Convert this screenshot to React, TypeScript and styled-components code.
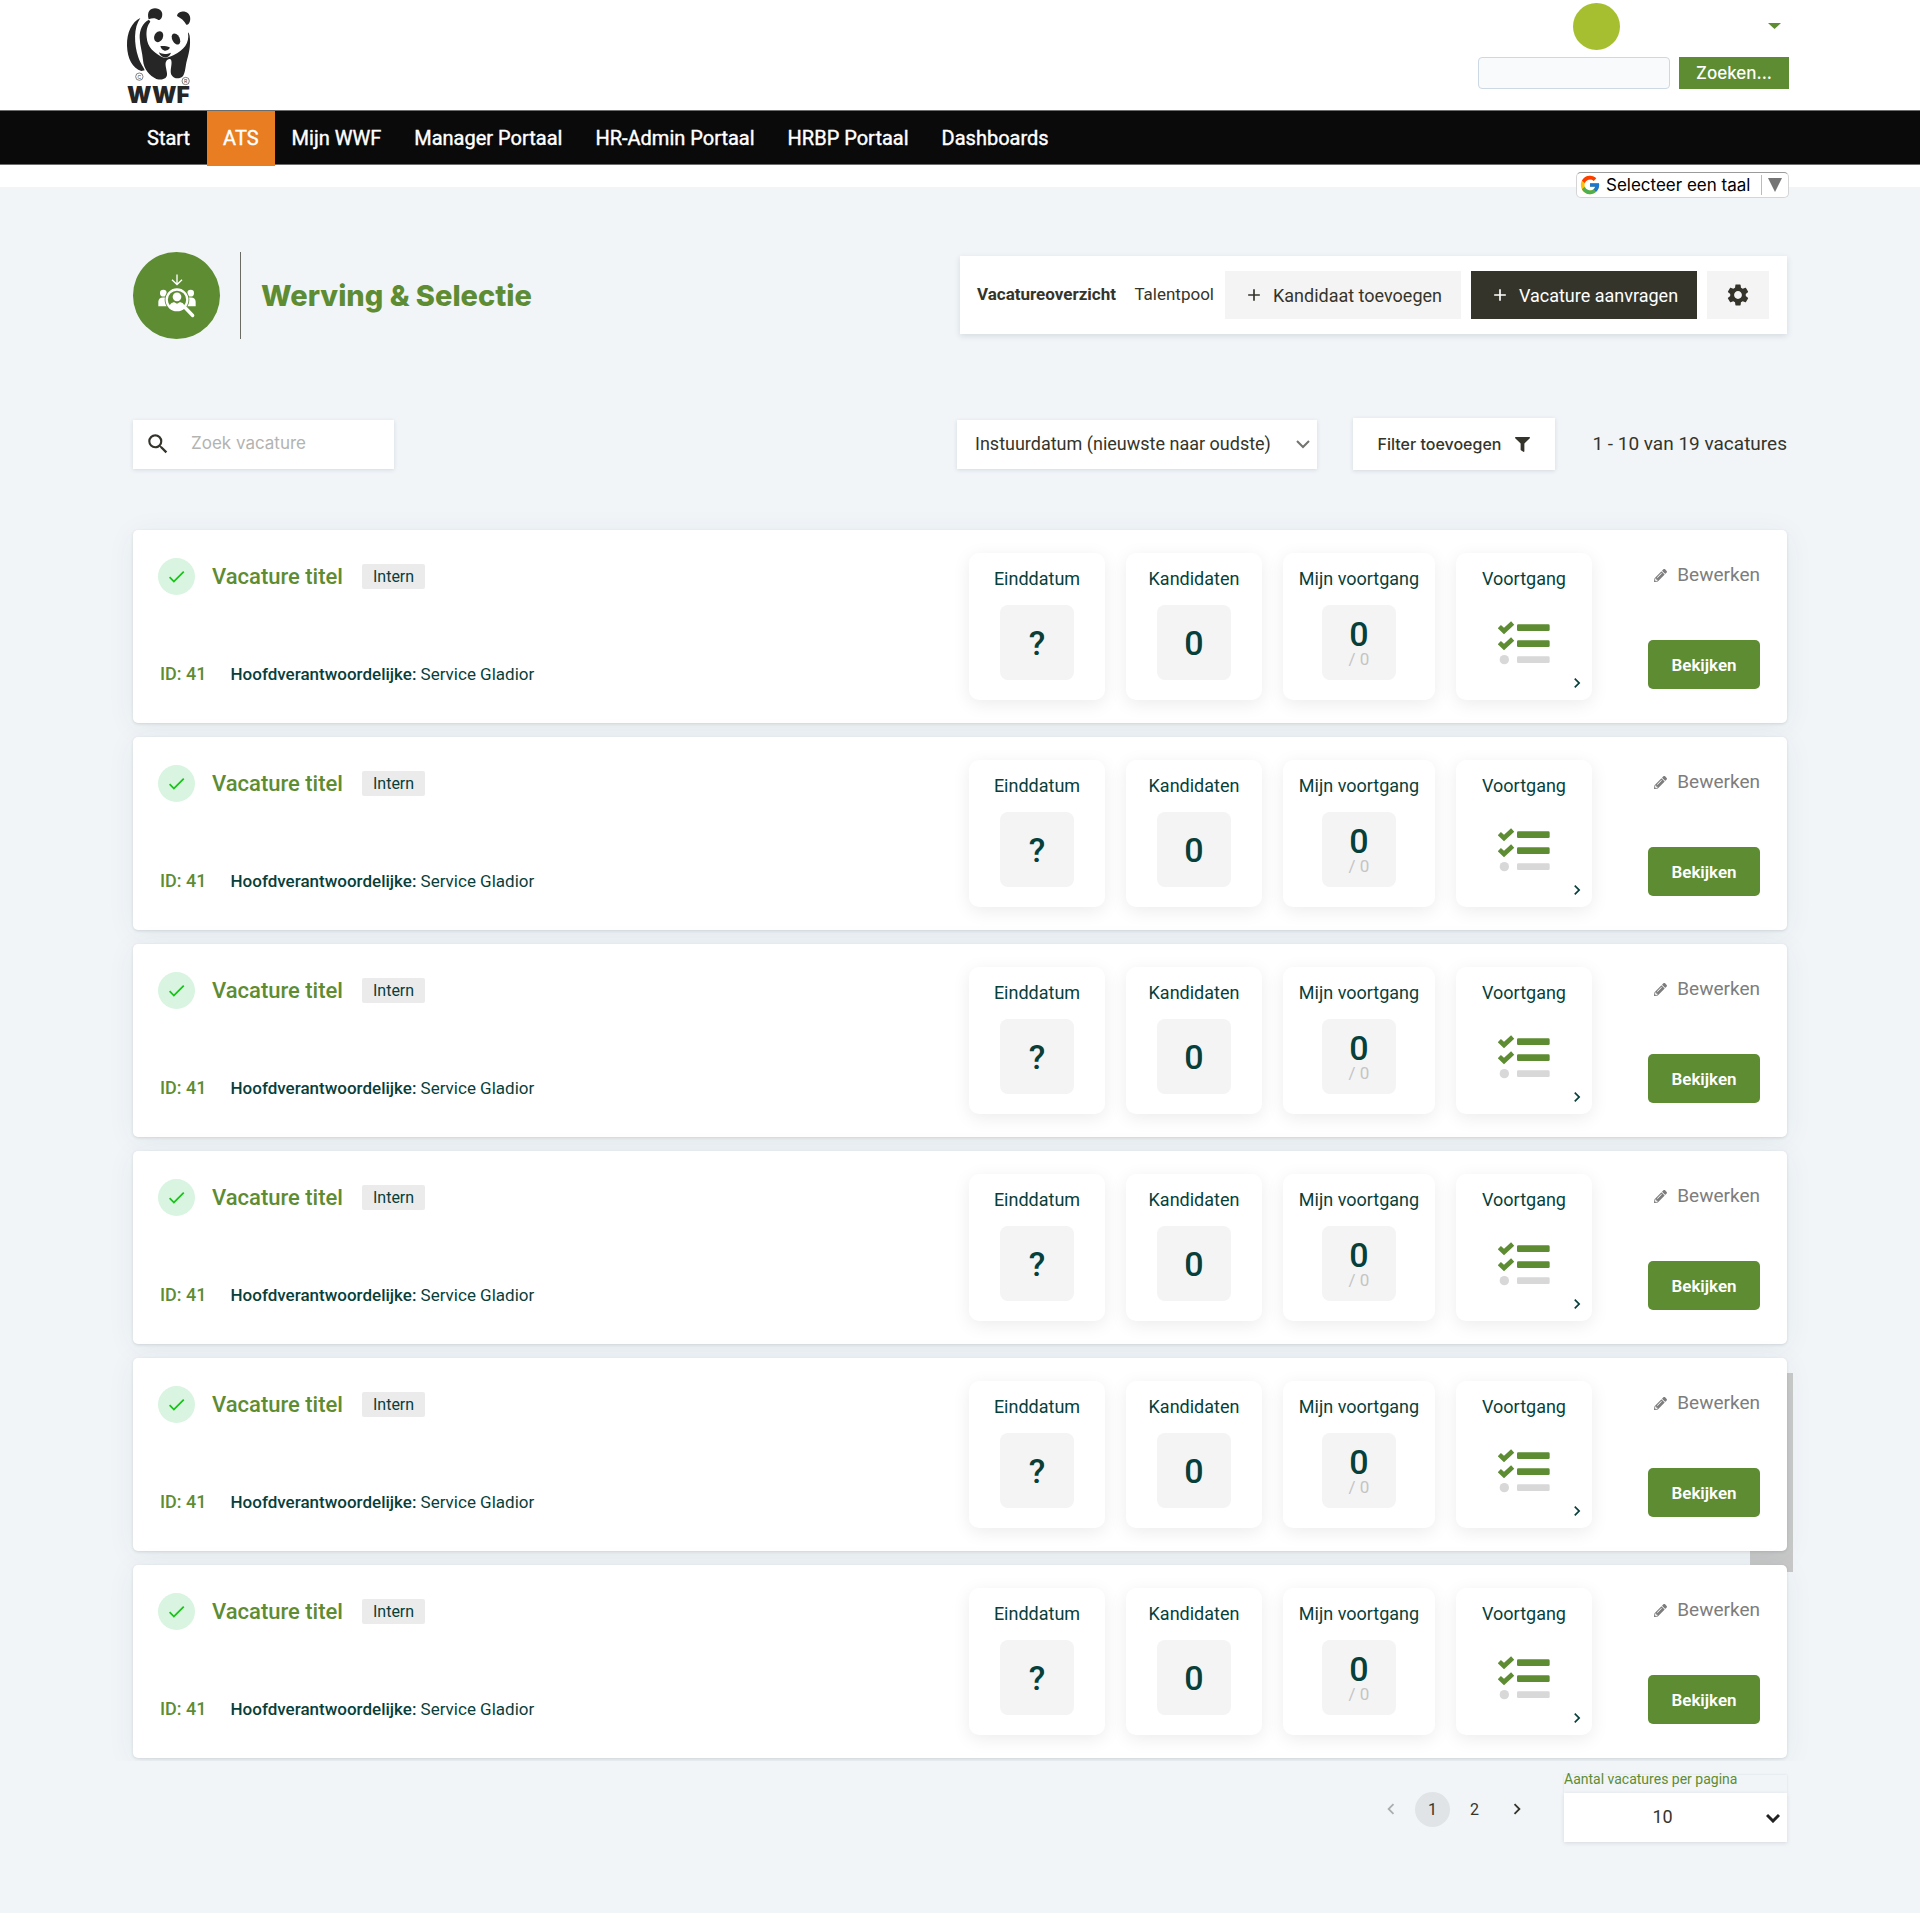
import React from 'react';
import styled, { createGlobalStyle, css } from 'styled-components';
import { FcGoogle } from 'react-icons/fc';
import { MdAdd, MdCheck, MdChevronLeft, MdChevronRight, MdSearch, MdSettings } from 'react-icons/md';
import { FaFilter, FaPencilAlt } from 'react-icons/fa';

const color = {
  green: '#5e8c33',
  teal: '#073f3b',
  ink: '#35342a',
  page: '#f1f5f8',
  black: '#0a0a0a',
  orange: '#e87d22',
  soft: '#f4f4f4',
};

const body = `Roboto, "Liberation Sans", sans-serif`;
const display = `Inter, "Open Sans", sans-serif`;

const GlobalStyle = createGlobalStyle`
  *, *::before, *::after { box-sizing: border-box; }
  body { margin: 0; background: ${color.page}; font-family: ${body}; color: ${color.ink}; }
  button, input, select { font: inherit; color: inherit; border: 0; margin: 0; padding: 0; border-radius: 0; }
  button { cursor: pointer; background: none; }
  h1, h2, p, ul { margin: 0; padding: 0; }
  ul { list-style: none; }
  a { color: inherit; text-decoration: none; }
  svg { display: block; flex: none; }
`;

const flatShadow = css`
  box-shadow: 0 1px 4px rgba(40, 60, 80, 0.14);
`;

/* Top of the page */

const Header = styled.header`
  display: flex;
  justify-content: space-between;
  height: 110px;
  padding: 0 131px 0 110px;
  background: #fff;
`;

const Account = styled.div`
  display: flex;
  flex-direction: column;
  align-items: flex-end;
  gap: 8px;
  padding-top: 3px;
`;

const ProfileMenu = styled.button`
  display: flex;
  align-items: center;
  justify-content: space-between;
  width: 216px;
  height: 46px;
  padding-right: 8px;
`;

const Avatar = styled.span`
  width: 47px;
  height: 47px;
  border-radius: 50%;
  background: #a6bf30;
`;

const SiteSearch = styled.form`
  display: flex;
  gap: 9px;
`;

const SiteSearchInput = styled.input`
  width: 192px;
  height: 32px;
  padding: 0 8px;
  border: 1px solid #ccd8e3;
  border-radius: 4px;
  background: #f9fafc;
  font-size: 16px;
`;

const SiteSearchButton = styled.button`
  width: 110px;
  height: 32px;
  background: ${color.green};
  color: #fff;
  font-family: ${display};
  font-size: 17px;
  font-weight: 500;
`;

const Nav = styled.nav`
  display: flex;
  gap: 1px;
  height: 55px;
  padding: 0 131px;
  background: ${color.black};
  border-top: 1px solid #6d6d6d;
  border-bottom: 1px solid #6d6d6d;
`;

const NavLink = styled.a<{ $active?: boolean }>`
  display: flex;
  align-items: center;
  height: 55px;
  padding: 0 16px 2px;
  font-size: 20px;
  color: #fff;
  -webkit-text-stroke: 0.4px #fff;
  background: ${(p) => (p.$active ? color.orange : 'transparent')};
`;

const LanguageStrip = styled.div`
  display: flex;
  justify-content: flex-end;
  height: 22px;
  padding: 7px 131px 0;
  background: #fff;
`;

const LanguagePicker = styled.label`
  display: flex;
  align-items: center;
  position: relative;
  width: 213px;
  height: 26px;
  padding-left: 2px;
  border: 1px solid #d5d5d5;
  border-top-color: #9b9b9b;
  border-radius: 5px;
  background: #fff;
`;

const LanguageSelect = styled.select`
  appearance: none;
  flex: 1;
  min-width: 0;
  height: 22px;
  padding: 0 0 0 5px;
  background: transparent;
  color: #000;
  font-family: ${display};
  font-size: 17px;
`;

const LanguageArrow = styled.span`
  display: flex;
  align-items: center;
  height: 20px;
  padding: 0 6px;
  border-left: 1px solid #bbb;
  pointer-events: none;
`;

/* Page heading and actions */

const Main = styled.main`
  padding: 65px 133px 71px;
`;

const Heading = styled.div`
  display: flex;
  align-items: flex-start;
  justify-content: space-between;
`;

const PageTitle = styled.div`
  display: flex;
  align-items: center;
`;

const TitleBadge = styled.span`
  display: grid;
  place-items: center;
  width: 87px;
  height: 87px;
  border-radius: 50%;
  background: ${color.green};
`;

const Title = styled.h1`
  display: flex;
  align-items: center;
  height: 87px;
  margin-left: 20px;
  padding-left: 20px;
  border-left: 1px solid #6b6b66;
  color: ${color.green};
  font-family: ${display};
  font-size: 29px;
  font-weight: 800;
`;

const Toolbar = styled.div`
  display: flex;
  align-items: center;
  width: 827px;
  height: 78px;
  margin-top: 4px;
  padding: 0 18px 0 17px;
  background: #fff;
  box-shadow: 0 2px 6px rgba(40, 60, 80, 0.14);
`;

const Tabs = styled.div`
  display: flex;
  flex: 1;
  justify-content: space-between;
  padding: 0 11px 2px 0;
`;

const Tab = styled.a<{ $active?: boolean }>`
  font-size: 17px;
  line-height: 24px;
  font-weight: ${(p) => (p.$active ? 700 : 400)};
`;

const ToolButton = styled.button<{ $dark?: boolean; $width: number }>`
  display: flex;
  align-items: center;
  justify-content: center;
  gap: 9px;
  width: ${(p) => p.$width}px;
  height: 48px;
  background: ${(p) => (p.$dark ? color.ink : color.soft)};
  color: ${(p) => (p.$dark ? '#fff' : color.ink)};
  font-size: 18px;

  & + & {
    margin-left: 10px;
  }
`;

/* Filters */

const Filters = styled.div`
  display: flex;
  align-items: center;
  height: 52px;
  margin-top: 79px;
`;

const VacancySearch = styled.label`
  ${flatShadow}
  display: flex;
  align-items: center;
  gap: 20px;
  width: 261px;
  height: 49px;
  margin-right: auto;
  padding: 0 12px;
  background: #fff;
`;

const VacancyInput = styled.input`
  flex: 1;
  min-width: 0;
  height: 32px;
  padding-bottom: 2px;
  background: transparent;
  font-family: ${display};
  font-size: 17px;
  outline: 0;

  &::placeholder {
    color: #b3b3b0;
    opacity: 1;
  }
`;

const SelectBox = styled.div<{ $width: number }>`
  ${flatShadow}
  display: grid;
  align-items: center;
  width: ${(p) => p.$width}px;
  height: 49px;
  background: #fff;

  & > * {
    grid-area: 1 / 1;
  }

  & > svg {
    justify-self: end;
    margin-right: 7px;
    pointer-events: none;
  }
`;

const Select = styled.select<{ $centered?: boolean }>`
  appearance: none;
  width: 100%;
  height: 49px;
  padding: ${(p) => (p.$centered ? '0 26px 2px 0' : '0 30px 2px 18px')};
  background: transparent;
  font-size: 18px;
  text-align: ${(p) => (p.$centered ? 'center' : 'left')};
  text-align-last: ${(p) => (p.$centered ? 'center' : 'left')};
`;

const FilterButton = styled.button`
  ${flatShadow}
  display: flex;
  align-items: center;
  justify-content: center;
  gap: 14px;
  width: 202px;
  height: 52px;
  margin: 0 36px;
  background: #fff;
  font-family: ${display};
  font-size: 16px;
  font-weight: 500;
`;

const Count = styled.p`
  width: 196px;
  padding-bottom: 2px;
  font-size: 19px;
  text-align: right;
  white-space: nowrap;
`;

/* Vacancy list */

const List = styled.ul`
  display: grid;
  gap: 14px;
  margin-top: 60px;
  isolation: isolate;
  clip-path: inset(-40px -40px -3px -40px);
`;

const Card = styled.li<{ $marked?: boolean }>`
  display: flex;
  align-items: center;
  position: relative;
  height: 193px;
  padding: 23px 27px 23px 25px;
  border-radius: 5px;
  background: #fff;
  box-shadow: 0 1px 3px rgba(40, 50, 60, 0.14), 0 4px 30px rgba(40, 60, 80, 0.06);

  ${(p) =>
    p.$marked &&
    css`
      &::before {
        content: '';
        position: absolute;
        z-index: -1;
        right: -6px;
        top: 15px;
        width: 43px;
        height: 199px;
        background: #c9c9c9;
      }
    `}
`;

const Summary = styled.div`
  display: flex;
  flex: 1;
  flex-direction: column;
  justify-content: space-between;
  align-self: stretch;
  padding: 5px 0 14px;
`;

const SummaryTop = styled.div`
  display: flex;
  align-items: center;
  height: 37px;
`;

const Status = styled.span`
  display: grid;
  place-items: center;
  width: 37px;
  height: 37px;
  margin-right: 17px;
  border-radius: 50%;
  background: #d9f4e0;
  color: #19c419;
`;

const VacancyTitle = styled.h2`
  color: ${color.green};
  font-size: 22px;
  font-weight: 500;
`;

const Tag = styled.span`
  margin-left: 19px;
  padding: 0 11px;
  border-radius: 2px;
  background: #ebebeb;
  color: ${color.teal};
  font-size: 16px;
  line-height: 25px;
`;

const Meta = styled.p`
  display: flex;
  align-items: center;
  gap: 24px;
  padding-left: 2px;
  color: ${color.teal};
  font-size: 17px;
  line-height: 24px;
`;

const VacancyId = styled.span`
  color: ${color.green};
  font-size: 18px;
  font-weight: 500;
`;

const Strong = styled.strong`
  font-weight: 500;
`;

const Stats = styled.div`
  display: flex;
  gap: 21px;
  margin-right: 56px;
`;

const tile = css`
  display: flex;
  flex-direction: column;
  align-items: center;
  gap: 15px;
  height: 147px;
  padding-top: 14px;
  border-radius: 10px;
  background: #fff;
  color: ${color.teal};
  font-size: 18px;
  line-height: 23px;
  box-shadow: 0 4px 18px rgba(0, 0, 0, 0.08);
`;

const Stat = styled.div<{ $wide?: boolean }>`
  ${tile}
  width: ${(p) => (p.$wide ? 152 : 136)}px;
`;

const ProgressButton = styled.button`
  ${tile}
  position: relative;
  width: 136px;
`;

const StatBox = styled.div`
  display: flex;
  flex-direction: column;
  align-items: center;
  justify-content: center;
  width: 74px;
  height: 75px;
  border-radius: 8px;
  background: ${color.soft};
`;

const StatValue = styled.span`
  font-size: 34px;
  line-height: 32px;
  font-weight: 500;
`;

const StatTotal = styled.span`
  color: #c4c4c4;
  font-size: 17px;
  line-height: 18px;
`;

const ProgressIcon = styled.span`
  display: grid;
  place-items: center;
  width: 74px;
  height: 75px;
`;

const Corner = styled.span`
  position: absolute;
  right: 5px;
  bottom: 7px;
`;

const Actions = styled.div`
  display: flex;
  flex-direction: column;
  align-items: flex-end;
  justify-content: space-between;
  align-self: stretch;
  width: 112px;
  padding: 10px 0 11px;
`;

const EditLink = styled.a`
  display: flex;
  align-items: center;
  gap: 10px;
  color: #7d7d7d;
  font-size: 19px;
  line-height: 24px;
`;

const ViewButton = styled.button`
  width: 112px;
  height: 49px;
  border-radius: 5px;
  background: ${color.green};
  color: #fff;
  font-size: 17px;
  font-weight: 600;
`;

/* Pagination */

const Footer = styled.div`
  display: flex;
  justify-content: flex-end;
  gap: 30px;
  margin-top: 17px;
`;

const Pages = styled.nav`
  display: flex;
  align-items: center;
  gap: 7px;
  height: 68px;
`;

const PageButton = styled.button<{ $active?: boolean; $muted?: boolean }>`
  display: grid;
  place-items: center;
  width: 35px;
  height: 35px;
  border-radius: 50%;
  background: ${(p) => (p.$active ? '#e0e4e7' : 'transparent')};
  color: ${(p) => (p.$muted ? '#acaeae' : color.ink)};
  font-size: 16px;
`;

const PageSize = styled.div`
  display: flex;
  flex-direction: column;
`;

const PageSizeLabel = styled.label`
  height: 18px;
  color: ${color.green};
  font-size: 14px;
  line-height: 8px;
  box-shadow: 0 0 2px rgba(40, 60, 80, 0.12);
`;

/* Drawings */

const Logo = () => (
  <svg width="100" height="110" viewBox="0 0 300 330" role="img" aria-label="WWF">
    <g fill="#262626">
      <path d="M116 58C110 36 120 25 135 25C151 25 160 36 156 50C154 57 149 60 145 60C135 52 126 54 116 58Z" />
      <path d="M201 48C203 37 214 34 225 35C238 37 243 51 240 63C238 71 234 75 229 74C223 62 212 54 201 48Z" />
      <path d="M91 54C66 66 50 96 51 137C52 175 68 205 94 213L104 211C101 202 91 191 85 172C72 132 70 83 91 54Z" />
      <path d="M117 59C98 68 88 90 89 113C90 138 97 156 99 181C101 207 119 228 139 237C158 242 173 236 171 220C170 207 164 193 168 185C172 177 181 174 184 182C187 194 179 211 184 224C190 236 206 238 216 231C225 224 226 203 229 188C236 163 243 138 239 108C237 99 234 95 234 99C239 128 222 151 190 166C181 171 165 177 154 170C132 158 112 142 110 112C108 90 112 76 121 65Z" />
      <ellipse cx="146" cy="110" rx="13" ry="17" transform="rotate(25 146 110)" />
      <ellipse cx="198" cy="117" rx="11" ry="18" transform="rotate(-28 198 117)" />
      <path d="M151 139C158 137 171 139 179 142C180 148 171 153 164 152C158 151 153 146 151 139Z" />
      <path d="M147 157C157 164 171 163 183 158C180 169 170 174 162 172C153 170 149 164 147 157Z" />
      <text x="145" y="309" textAnchor="middle" fontFamily="Inter, sans-serif" fontWeight="900" fontSize="68">WWF</text>
    </g>
    <g fill="none" stroke="#444" strokeWidth="2">
      <circle cx="88" cy="230" r="11" />
      <circle cx="227" cy="243" r="11" />
    </g>
    <g fill="#444" fontFamily="Inter, sans-serif" fontSize="15" textAnchor="middle">
      <text x="88" y="236">C</text>
      <text x="227" y="248">R</text>
    </g>
  </svg>
);

const RecruitIcon = () => (
  <svg width="40" height="45" viewBox="110 98 120 134" fill="#fff">
    <path d="M170 102V131M155 118L170 132L185 118" fill="none" stroke="#fff" strokeWidth="4" />
    <circle cx="129" cy="158" r="10" />
    <circle cx="211" cy="158" r="10" />
    <path d="M114 197V184C114 175 120 171 128 171H140V197Z" />
    <path d="M226 197V184C226 175 220 171 212 171H200V197Z" />
    <circle cx="170" cy="178" r="37" fill={color.green} />
    <circle cx="170" cy="178" r="31" fill="none" stroke="#fff" strokeWidth="7" />
    <circle cx="170" cy="169" r="13" />
    <path d="M147 203C147 191 154 185 162 185L170 190L178 185C187 185 193 191 193 203Q170 219 147 203Z" />
    <path d="M194 201L217 225" stroke="#fff" strokeWidth="10" strokeLinecap="round" />
  </svg>
);

const ChecklistIcon = () => (
  <svg width="52" height="44" viewBox="0 0 156 132">
    <g fill="none" stroke={color.green} strokeWidth="14">
      <path d="M4 17L18 30L44 6" />
      <path d="M4 65L18 78L44 54" />
    </g>
    <rect x="57" y="10" width="98" height="20" rx="4" fill={color.green} />
    <rect x="57" y="58" width="98" height="20" rx="4" fill={color.green} />
    <rect x="57" y="106" width="98" height="20" rx="4" fill="#d8d8d8" />
    <circle cx="19" cy="116" r="14" fill="#d8d8d8" />
  </svg>
);

const Chevron = ({ tone, weight }: { tone: string; weight: number }) => (
  <svg width="14" height="10" viewBox="0 0 14 10" fill="none" stroke={tone} strokeWidth={weight}>
    <path d="M1 2L7 8L13 2" />
  </svg>
);

const navItems = ['Start', 'ATS', 'Mijn WWF', 'Manager Portaal', 'HR-Admin Portaal', 'HRBP Portaal', 'Dashboards'];

const vacancies = Array.from({ length: 6 }, (_, key) => ({
  key,
  title: 'Vacature titel',
  tag: 'Intern',
  id: 41,
  owner: 'Service Gladior',
  candidates: 0,
  done: 0,
  total: 0,
}));

type Vacancy = (typeof vacancies)[number];

const VacancyCard = ({ vacancy, marked }: { vacancy: Vacancy; marked: boolean }) => (
  <Card $marked={marked}>
    <Summary>
      <SummaryTop>
        <Status>
          <MdCheck size={21} />
        </Status>
        <VacancyTitle>{vacancy.title}</VacancyTitle>
        <Tag>{vacancy.tag}</Tag>
      </SummaryTop>
      <Meta>
        <VacancyId>ID: {vacancy.id}</VacancyId>
        <span>
          <Strong>Hoofdverantwoordelijke:</Strong> {vacancy.owner}
        </span>
      </Meta>
    </Summary>
    <Stats>
      <Stat>
        Einddatum
        <StatBox>
          <StatValue>?</StatValue>
        </StatBox>
      </Stat>
      <Stat>
        Kandidaten
        <StatBox>
          <StatValue>{vacancy.candidates}</StatValue>
        </StatBox>
      </Stat>
      <Stat $wide>
        Mijn voortgang
        <StatBox>
          <StatValue>{vacancy.done}</StatValue>
          <StatTotal>/ {vacancy.total}</StatTotal>
        </StatBox>
      </Stat>
      <ProgressButton type="button">
        Voortgang
        <ProgressIcon>
          <ChecklistIcon />
        </ProgressIcon>
        <Corner>
          <MdChevronRight size={20} />
        </Corner>
      </ProgressButton>
    </Stats>
    <Actions>
      <EditLink href="#">
        <FaPencilAlt size={13} />
        Bewerken
      </EditLink>
      <ViewButton type="button">Bekijken</ViewButton>
    </Actions>
  </Card>
);

export default function App() {
  return (
    <>
      <GlobalStyle />
      <Header>
        <Logo />
        <Account>
          <ProfileMenu type="button" aria-label="Profiel">
            <Avatar />
            <svg width="13" height="6" viewBox="0 0 13 6" fill={color.green}>
              <path d="M0 0H13L6.5 6Z" />
            </svg>
          </ProfileMenu>
          <SiteSearch onSubmit={(e) => e.preventDefault()}>
            <SiteSearchInput type="text" aria-label="Zoeken" />
            <SiteSearchButton type="submit">Zoeken...</SiteSearchButton>
          </SiteSearch>
        </Account>
      </Header>
      <Nav>
        {navItems.map((item) => (
          <NavLink key={item} href="#" $active={item === 'ATS'}>
            {item}
          </NavLink>
        ))}
      </Nav>
      <LanguageStrip>
        <LanguagePicker>
          <FcGoogle size={22} />
          <LanguageSelect aria-label="Taal">
            <option>Selecteer een taal</option>
          </LanguageSelect>
          <LanguageArrow>
            <svg width="14" height="14" viewBox="0 0 14 14" fill="#747474">
              <path d="M0 0H14L7 14Z" />
            </svg>
          </LanguageArrow>
        </LanguagePicker>
      </LanguageStrip>
      <Main>
        <Heading>
          <PageTitle>
            <TitleBadge>
              <RecruitIcon />
            </TitleBadge>
            <Title>Werving &amp; Selectie</Title>
          </PageTitle>
          <Toolbar>
            <Tabs>
              <Tab href="#" $active>
                Vacatureoverzicht
              </Tab>
              <Tab href="#">Talentpool</Tab>
            </Tabs>
            <ToolButton type="button" $width={236}>
              <MdAdd size={20} />
              Kandidaat toevoegen
            </ToolButton>
            <ToolButton type="button" $dark $width={226}>
              <MdAdd size={20} />
              Vacature aanvragen
            </ToolButton>
            <ToolButton type="button" aria-label="Instellingen" $width={62}>
              <MdSettings size={26} />
            </ToolButton>
          </Toolbar>
        </Heading>
        <Filters>
          <VacancySearch>
            <MdSearch size={26} />
            <VacancyInput type="text" placeholder="Zoek vacature" aria-label="Zoek vacature" />
          </VacancySearch>
          <SelectBox $width={360}>
            <Select aria-label="Sorteren">
              <option>Instuurdatum (nieuwste naar oudste)</option>
            </Select>
            <Chevron tone="#74746f" weight={2} />
          </SelectBox>
          <FilterButton type="button">
            Filter toevoegen
            <FaFilter size={15} />
          </FilterButton>
          <Count>1 - 10 van 19 vacatures</Count>
        </Filters>
        <List>
          {vacancies.map((vacancy) => (
            <VacancyCard key={vacancy.key} vacancy={vacancy} marked={vacancy.key === 4} />
          ))}
        </List>
        <Footer>
          <Pages aria-label="Pagina's">
            <PageButton type="button" aria-label="Vorige" $muted>
              <MdChevronLeft size={22} />
            </PageButton>
            <PageButton type="button" $active>
              1
            </PageButton>
            <PageButton type="button">2</PageButton>
            <PageButton type="button" aria-label="Volgende">
              <MdChevronRight size={22} />
            </PageButton>
          </Pages>
          <PageSize>
            <PageSizeLabel htmlFor="page-size">Aantal vacatures per pagina</PageSizeLabel>
            <SelectBox $width={223}>
              <Select id="page-size" $centered>
                <option>10</option>
              </Select>
              <Chevron tone="#222" weight={3} />
            </SelectBox>
          </PageSize>
        </Footer>
      </Main>
    </>
  );
}
